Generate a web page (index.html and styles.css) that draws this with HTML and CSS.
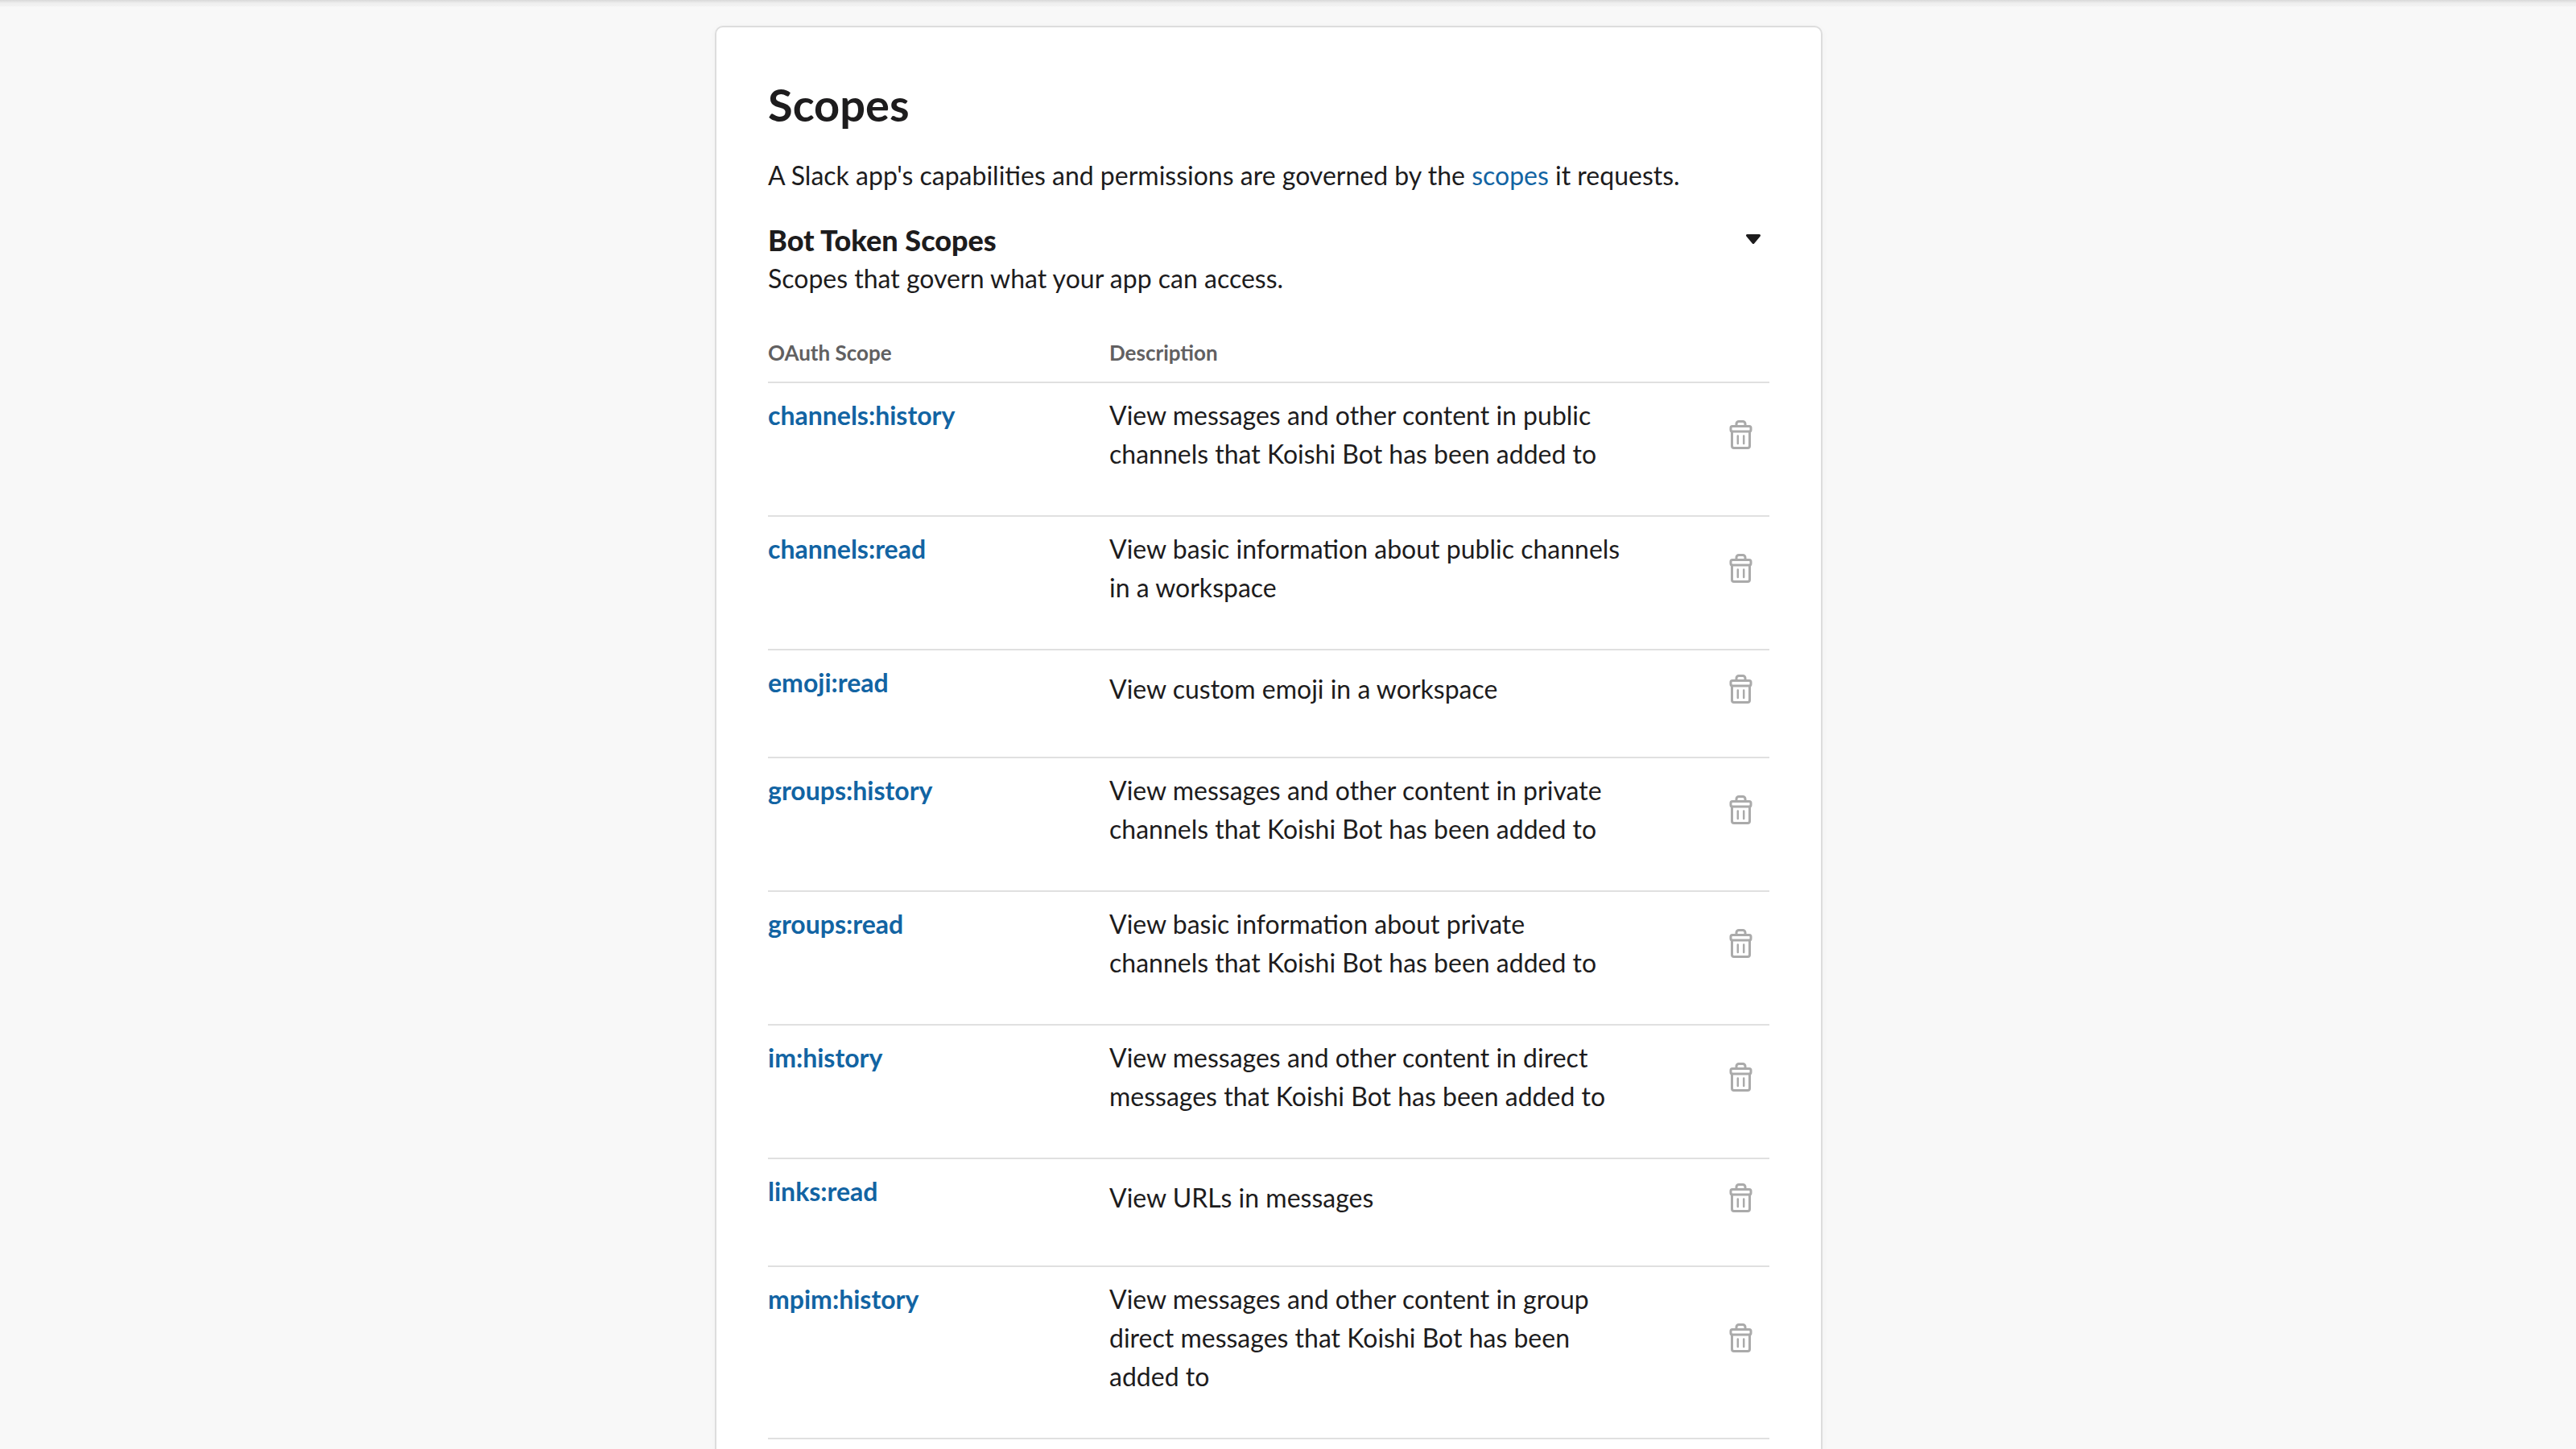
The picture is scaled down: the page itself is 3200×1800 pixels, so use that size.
FILE: index.html
```html
<!DOCTYPE html>
<html lang="en">
<head>
<meta charset="utf-8">
<meta name="viewport" content="width=device-width, initial-scale=1">
<title>Scopes</title>
<link rel="stylesheet" href="styles.css">
</head>
<body>
<svg class="sprite" aria-hidden="true">
  <symbol id="trash" viewBox="0 0 32 40">
    <g fill="none" stroke="currentColor" stroke-width="3" stroke-linecap="round" stroke-linejoin="round">
      <path d="M11 9V6.500a3 3 0 0 1 3-3h5a3 3 0 0 1 3 3V9"/>
      <rect x="4" y="9.500" width="25" height="6.500" rx="2"/>
      <path d="M5.500 16v18a2.500 2.500 0 0 0 2.500 2.500h17a2.500 2.500 0 0 0 2.500-2.500V16"/>
      <path d="M12.800 21.500v9.500M20.200 21.500v9.500" stroke-width="2.500"/>
    </g>
  </symbol>
</svg>
<div class="topbar-shadow"></div>
<main class="page">
  <section class="card">
    <h1 class="title">Scopes</h1>
    <p class="intro">A Slack app's capabilities and permissions are governed by the <a class="link" href="#scopes">scopes</a> it requests.</p>
    <header class="group">
      <div>
        <h2 class="group-title">Bot Token Scopes</h2>
        <p class="group-text">Scopes that govern what your app can access.</p>
      </div>
      <button class="toggle" type="button" aria-label="Collapse Bot Token Scopes">
        <svg class="caret" viewBox="0 0 20 14" aria-hidden="true"><path d="M2.500 2.500h15L10 11.500z" fill="currentColor" stroke="currentColor" stroke-width="3" stroke-linejoin="round"/></svg>
      </button>
    </header>
    <table class="scopes">
      <colgroup><col class="col-scope"><col class="col-desc"><col></colgroup>
      <thead>
        <tr><th scope="col">OAuth Scope</th><th scope="col">Description</th><td></td></tr>
      </thead>
      <tbody>
        <tr><td><a class="scope" href="#s1">channels:history</a></td><td><div class="desc">View messages and other content in public channels that Koishi Bot has been added to</div></td><td class="action"><button class="remove" type="button" aria-label="Remove channels:history"><svg class="icon"><use href="#trash"/></svg></button></td></tr>
        <tr><td><a class="scope" href="#s2">channels:read</a></td><td><div class="desc">View basic information about public channels in a workspace</div></td><td class="action"><button class="remove" type="button" aria-label="Remove channels:read"><svg class="icon"><use href="#trash"/></svg></button></td></tr>
        <tr><td><a class="scope" href="#s3">emoji:read</a></td><td><div class="desc">View custom emoji in a workspace</div></td><td class="action"><button class="remove" type="button" aria-label="Remove emoji:read"><svg class="icon"><use href="#trash"/></svg></button></td></tr>
        <tr><td><a class="scope" href="#s4">groups:history</a></td><td><div class="desc">View messages and other content in private channels that Koishi Bot has been added to</div></td><td class="action"><button class="remove" type="button" aria-label="Remove groups:history"><svg class="icon"><use href="#trash"/></svg></button></td></tr>
        <tr><td><a class="scope" href="#s5">groups:read</a></td><td><div class="desc">View basic information about private channels that Koishi Bot has been added to</div></td><td class="action"><button class="remove" type="button" aria-label="Remove groups:read"><svg class="icon"><use href="#trash"/></svg></button></td></tr>
        <tr><td><a class="scope" href="#s6">im:history</a></td><td><div class="desc">View messages and other content in direct messages that Koishi Bot has been added to</div></td><td class="action"><button class="remove" type="button" aria-label="Remove im:history"><svg class="icon"><use href="#trash"/></svg></button></td></tr>
        <tr><td><a class="scope" href="#s7">links:read</a></td><td><div class="desc">View URLs in messages</div></td><td class="action"><button class="remove" type="button" aria-label="Remove links:read"><svg class="icon"><use href="#trash"/></svg></button></td></tr>
        <tr><td><a class="scope" href="#s8">mpim:history</a></td><td><div class="desc">View messages and other content in group direct messages that Koishi Bot has been added to</div></td><td class="action"><button class="remove" type="button" aria-label="Remove mpim:history"><svg class="icon"><use href="#trash"/></svg></button></td></tr>
      </tbody>
    </table>
  </section>
</main>
</body>
</html>
```
FILE: styles.css
```css
*, *::before, *::after {
  box-sizing: border-box;
}

body {
  margin: 0;
  height: 100vh;
  overflow: hidden;
  background: #f8f8f8;
  color: #1d1c1d;
  font-family: Lato, "Open Sans", sans-serif;
  font-size: 32px;
  line-height: 48px;
}

.sprite {
  display: none;
}

.topbar-shadow {
  height: 8px;
  background: linear-gradient(#d8d8d8, #efefef 4px, #f2f2f2);
}

.page {
  display: flex;
  justify-content: center;
  padding: 24px 48px 0 0;
}

.card {
  width: 100%;
  max-width: 1376px;
  padding: 64px;
  border: 2px solid #dddddd;
  border-radius: 10px;
  background: #ffffff;
  box-shadow: 0 2px 8px rgba(0, 0, 0, 0.04);
}

.title {
  margin: 0 0 32px;
  font-size: 56px;
  line-height: 64px;
  font-weight: 700;
}

.intro {
  margin: 0 0 32px;
}

.link,
.scope {
  color: #1264a3;
  text-decoration: none;
}

.scope {
  font-weight: 700;
}

.group {
  display: flex;
  align-items: flex-start;
  justify-content: space-between;
  margin-bottom: 48px;
}

.group-title {
  margin: 0;
  font-size: 36px;
  line-height: 48px;
  font-weight: 900;
}

.group-text {
  margin: 0;
}

.toggle,
.remove {
  display: flex;
  align-items: center;
  justify-content: center;
  padding: 0;
  border: 0;
  background: none;
  cursor: pointer;
}

.toggle {
  width: 40px;
  height: 46px;
  color: #1d1c1d;
}

.caret {
  width: 20px;
  height: 14px;
}

.scopes {
  width: 100%;
  table-layout: fixed;
  border-collapse: separate;
  border-spacing: 0;
}

.col-scope {
  width: 424px;
}

.col-desc {
  width: 640px;
}

.scopes th,
.scopes td {
  padding: 16px 0 52px;
  border-bottom: 2px solid #e0e0e0;
  text-align: left;
  vertical-align: top;
}

.scopes thead th,
.scopes thead td {
  padding: 0 0 16px;
  color: #616061;
  font-size: 26px;
  line-height: 40px;
  font-weight: 700;
}

.desc {
  display: flex;
  align-items: center;
  min-height: 64px;
}

.scopes .action {
  vertical-align: middle;
}

.remove {
  width: 72px;
  height: 64px;
  margin-left: auto;
  color: #aaaaaa;
}

.icon {
  width: 32px;
  height: 40px;
}
```
